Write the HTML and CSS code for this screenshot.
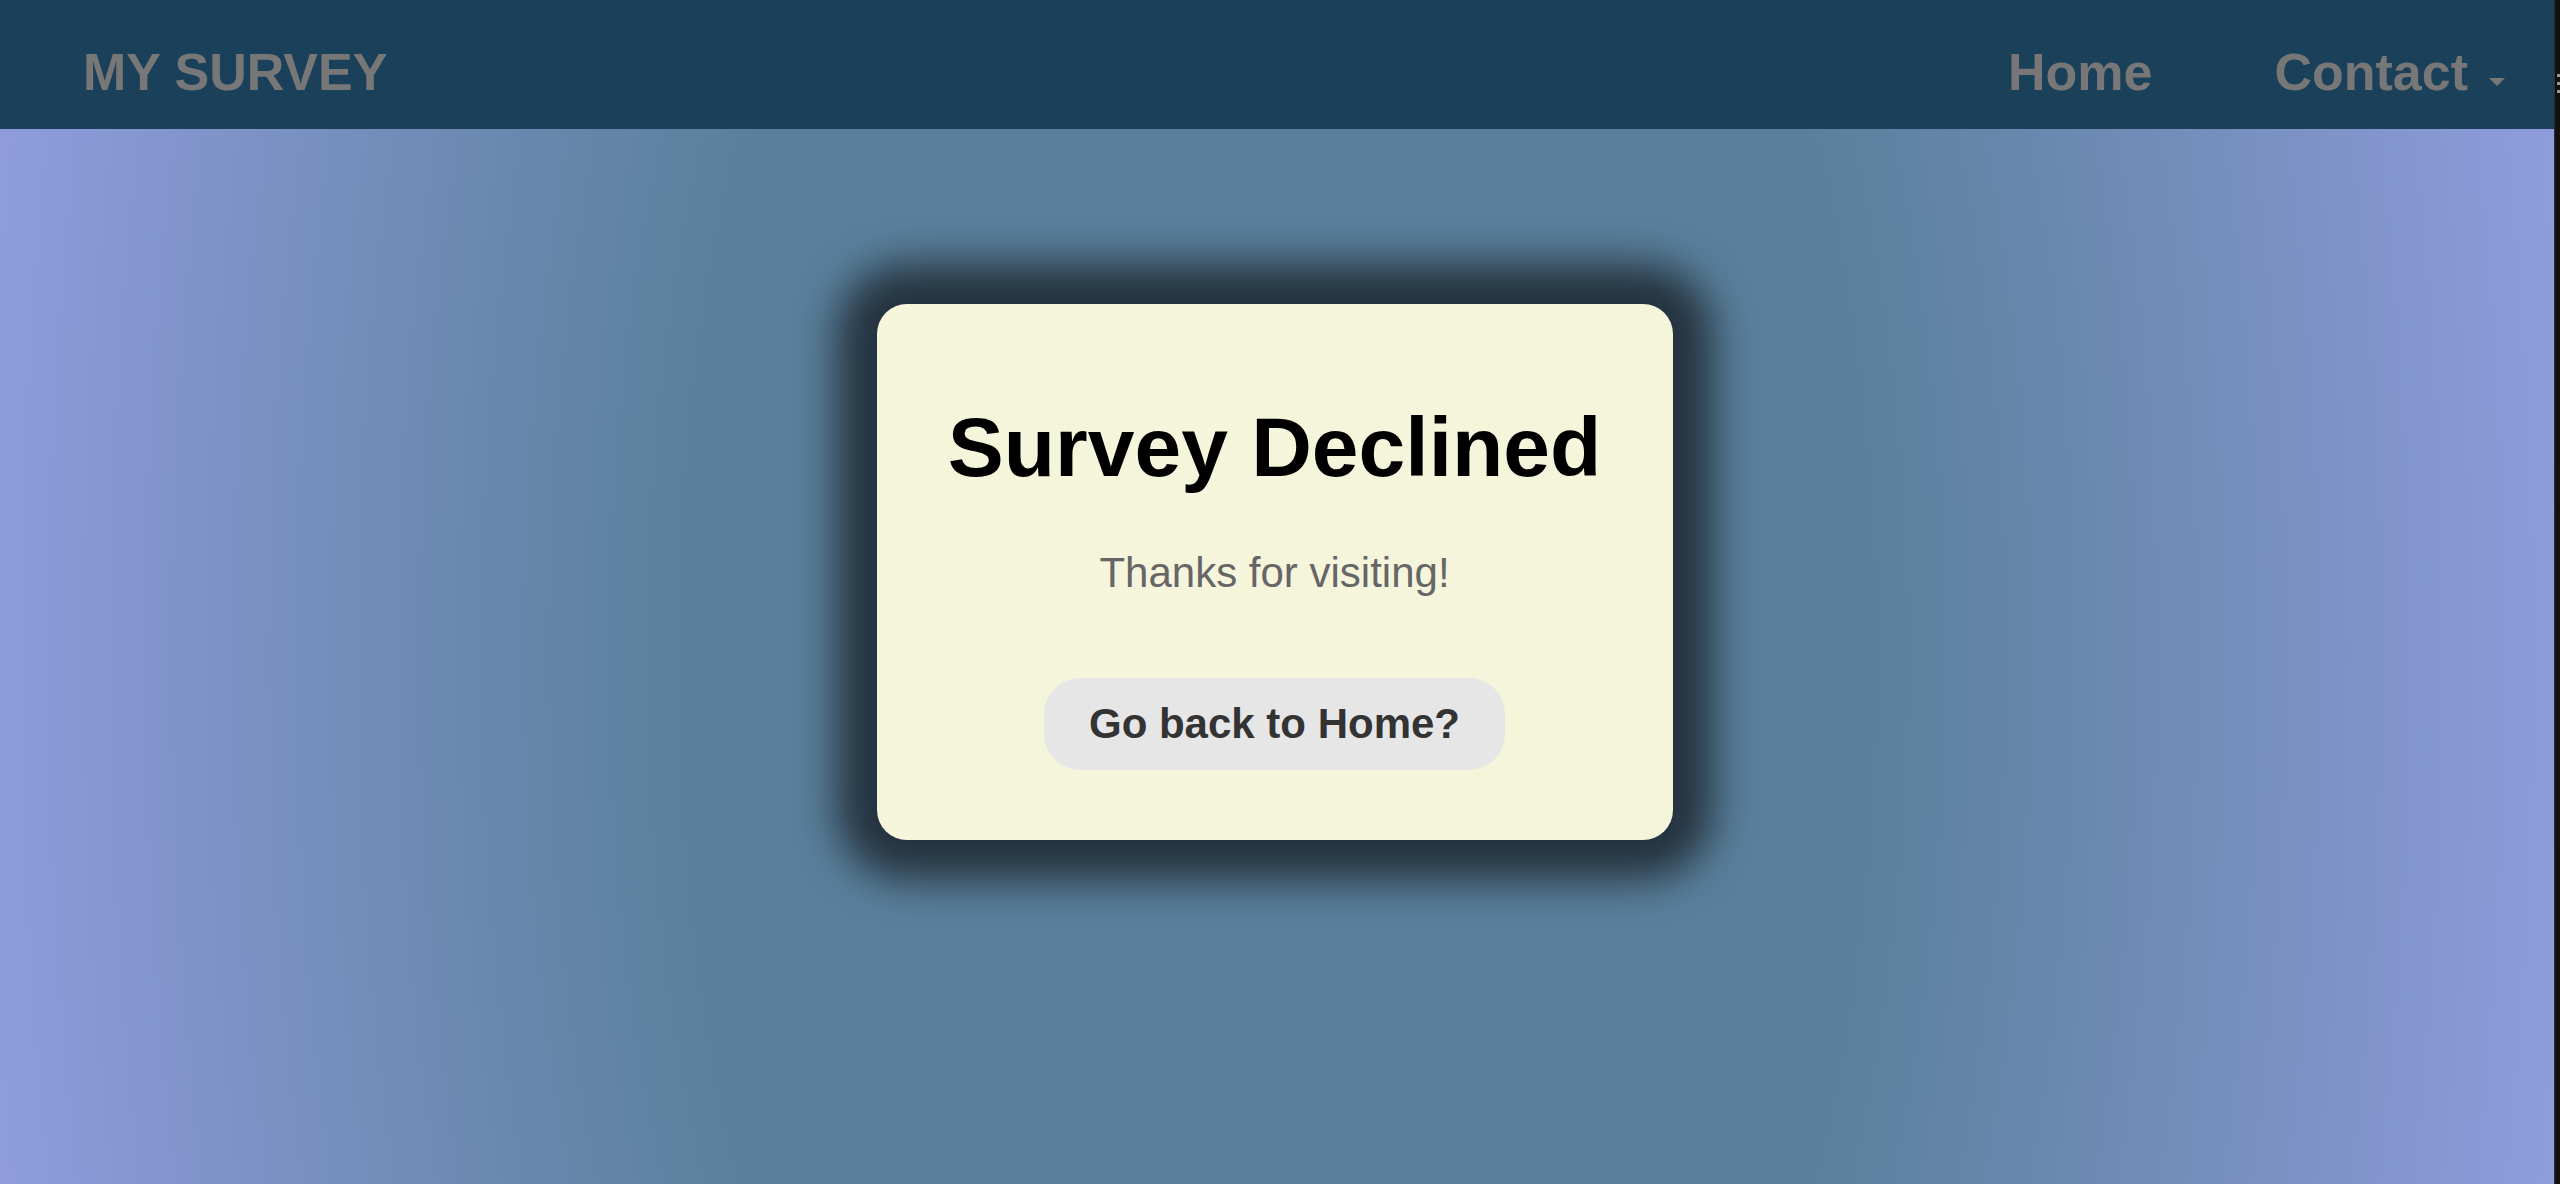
FILE: index.html
```html
<!DOCTYPE html>
<html lang="en">
<head>
<meta charset="utf-8">
<title>My Survey</title>
<link rel="stylesheet" href="styles.css">
</head>
<body>
<div class="window">
  <div class="page">
    <nav class="navbar">
      <a class="brand" href="#">MY SURVEY</a>
      <ul class="nav-links">
        <li><a href="#">Home</a></li>
        <li><a href="#">Contact<span class="caret"></span></a></li>
      </ul>
    </nav>
    <main class="main">
      <section class="card">
        <h1 class="title">Survey Declined</h1>
        <p class="message">Thanks for visiting!</p>
        <button class="home-btn" type="button">Go back to Home?</button>
      </section>
    </main>
  </div>
  <div class="edge">
    <span class="mark"></span>
    <span class="mark"></span>
    <span class="mark"></span>
  </div>
</div>
</body>
</html>
```

FILE: styles.css
```css
html, body {
  margin: 0;
  padding: 0;
  height: 100%;
  overflow: hidden;
  background: #121212;
  font-family: "Liberation Sans", Arial, Helvetica, sans-serif;
}

.window {
  display: flex;
  height: 1184px;
}

.page {
  width: 2555px;
  display: flex;
  flex-direction: column;
  border-right: 1px solid rgba(255, 255, 255, 0.12);
  box-sizing: border-box;
}

.edge {
  flex: 1;
  display: flex;
  flex-direction: column;
  align-items: flex-end;
  gap: 5px;
  padding-top: 74px;
  background: #111;
}

.mark {
  display: block;
  width: 3px;
  height: 3px;
  background: #9a9a9a;
}

.navbar {
  height: 129px;
  box-sizing: border-box;
  padding: 41px 49px 0 83px;
  background: #1b405a;
  display: flex;
  justify-content: space-between;
  align-items: flex-start;
}

.brand,
.nav-links a {
  font-size: 52px;
  line-height: 62px;
  font-weight: bold;
  color: #777777;
  text-decoration: none;
}

.nav-links {
  list-style: none;
  margin: 0;
  padding: 0;
  display: flex;
  gap: 122px;
}

.caret {
  display: inline-block;
  width: 0;
  height: 0;
  margin-left: 21px;
  margin-bottom: 4px;
  border-top: 8px solid #777777;
  border-left: 8px solid transparent;
  border-right: 8px solid transparent;
  vertical-align: baseline;
}

.main {
  flex: 1;
  display: flex;
  justify-content: center;
  align-items: flex-start;
  padding: 175px 5px 0 0;
  background: radial-gradient(ellipse 1300px 2600px at 50% 50%, #5a7f9b 45%, #8e9cdc 100%);
}

.card {
  width: 796px;
  box-sizing: border-box;
  padding: 93px 0 70px;
  background: #f5f5dc;
  border-radius: 30px;
  box-shadow: 0 0 40px 40px rgba(0, 0, 0, 0.6);
  display: flex;
  flex-direction: column;
  align-items: center;
  text-align: center;
}

.title {
  margin: 0;
  font-size: 84px;
  line-height: 101px;
  font-weight: bold;
  color: #000000;
}

.message {
  margin: 50px 0 0;
  font-size: 42px;
  line-height: 50px;
  color: #666666;
}

.home-btn {
  margin-top: 80px;
  padding: 21px 45px;
  border: none;
  border-radius: 36px;
  background: #e6e6e6;
  color: #333333;
  font-family: "Liberation Sans", Arial, Helvetica, sans-serif;
  font-size: 42px;
  line-height: 50px;
  font-weight: bold;
  cursor: pointer;
}
```
